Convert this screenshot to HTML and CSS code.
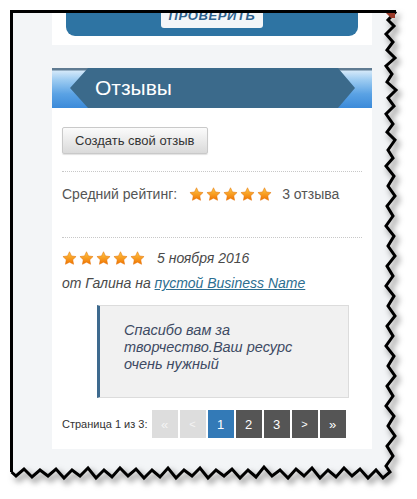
FILE: index.html
```html
<!DOCTYPE html>
<html lang="ru">
<head>
<meta charset="utf-8">
<title>Отзывы</title>
<link rel="stylesheet" href="styles.css">
</head>
<body>
<svg class="defs" width="0" height="0" aria-hidden="true">
  <defs>
    <linearGradient id="sg" x1="0" y1="0" x2="0" y2="1">
      <stop offset="0" stop-color="#ffc847"/>
      <stop offset="1" stop-color="#f07400"/>
    </linearGradient>
    <symbol id="star" viewBox="0 0 24 24">
      <path d="M12 1.2l3.2 6.7 7.3 1-5.3 5.1 1.3 7.3L12 17.8l-6.5 3.5 1.3-7.3L1.5 8.9l7.3-1z" fill="url(#sg)" stroke="#e06c00" stroke-width="0.8" stroke-linejoin="round"/>
    </symbol>
  </defs>
</svg>

<div class="column">
  <div class="top-card">
    <div class="promo"><span class="check-btn">ПРОВЕРИТЬ</span></div>
  </div>

  <div class="ribbon"><h2 class="ribbon-title">Отзывы</h2></div>

  <div class="panel">
    <button class="create" type="button">Создать свой отзыв</button>
    <div class="sep"></div>
    <div class="rating">
      <span class="rating-label">Средний рейтинг:</span>
      <span class="stars">
        <svg class="star"><use href="#star"/></svg><svg class="star"><use href="#star"/></svg><svg class="star"><use href="#star"/></svg><svg class="star"><use href="#star"/></svg><svg class="star"><use href="#star"/></svg>
      </span>
      <span class="rating-count">3 отзыва</span>
    </div>
    <div class="sep sep-wide"></div>

    <div class="review-head">
      <span class="stars">
        <svg class="star"><use href="#star"/></svg><svg class="star"><use href="#star"/></svg><svg class="star"><use href="#star"/></svg><svg class="star"><use href="#star"/></svg><svg class="star"><use href="#star"/></svg>
      </span>
      <span class="review-date">5 ноября 2016</span>
    </div>
    <div class="review-by">от Галина на <a class="review-link" href="#">пустой Business Name</a></div>

    <blockquote class="quote">
      <p class="quote-text">Спасибо вам за творчество.Ваш ресурс очень нужный</p>
    </blockquote>

    <div class="pager">
      <span class="pager-label">Страница 1 из 3:</span>
      <span class="pg pg-off">«</span>
      <span class="pg pg-off pg-small">&lt;</span>
      <span class="pg pg-on">1</span>
      <span class="pg">2</span>
      <span class="pg">3</span>
      <span class="pg pg-small">&gt;</span>
      <span class="pg">»</span>
    </div>
  </div>
</div>

<svg class="frame" width="417" height="499" viewBox="0 0 417 499" aria-hidden="true">
  <defs>
    <filter id="shadow" x="-10%" y="-10%" width="130%" height="130%">
      <feDropShadow dx="3" dy="4" stdDeviation="3" flood-color="#000" flood-opacity="0.55"/>
    </filter>
  </defs>
  <path fill="#ffffff" fill-rule="evenodd" d="M0 0H417V499H0Z M11.5 11.5 L396 11.5 L388 20 L394 26 L386 34 L393 42 L387 50 L395 58 L386 66 L392 74 L387 82 L396 90 L388 98 L394 106 L386 114 L393 124 L387 132 L395 140 L388 150 L393 158 L386 166 L394 176 L388 186 L395 196 L387 206 L393 216 L386 226 L394 236 L388 246 L395 256 L387 266 L393 276 L386 286 L394 296 L388 306 L395 316 L387 326 L393 336 L386 346 L394 356 L388 366 L395 376 L387 386 L393 396 L386 406 L394 416 L388 426 L395 436 L387 446 L393 456 L386 466 L390 472 L383 478 L376 470 L368 478 L360 469 L352 476 L344 468 L336 477 L328 470 L320 478 L312 468 L304 476 L296 469 L288 478 L280 470 L272 476 L264 467 L256 477 L248 470 L240 478 L232 469 L224 476 L216 470 L208 478 L200 468 L192 476 L184 470 L176 478 L168 468 L160 477 L152 470 L144 478 L136 469 L128 476 L120 468 L112 477 L104 470 L96 478 L88 468 L80 476 L72 470 L64 478 L56 469 L48 476 L40 470 L32 477 L24 469 L16 476 L11.5 472 Z"/>
  <path fill="none" stroke="#000" stroke-width="3" stroke-linejoin="miter" filter="url(#shadow)" d="M396 11.5 L388 20 L394 26 L386 34 L393 42 L387 50 L395 58 L386 66 L392 74 L387 82 L396 90 L388 98 L394 106 L386 114 L393 124 L387 132 L395 140 L388 150 L393 158 L386 166 L394 176 L388 186 L395 196 L387 206 L393 216 L386 226 L394 236 L388 246 L395 256 L387 266 L393 276 L386 286 L394 296 L388 306 L395 316 L387 326 L393 336 L386 346 L394 356 L388 366 L395 376 L387 386 L393 396 L386 406 L394 416 L388 426 L395 436 L387 446 L393 456 L386 466 L390 472 L383 478 L376 470 L368 478 L360 469 L352 476 L344 468 L336 477 L328 470 L320 478 L312 468 L304 476 L296 469 L288 478 L280 470 L272 476 L264 467 L256 477 L248 470 L240 478 L232 469 L224 476 L216 470 L208 478 L200 468 L192 476 L184 470 L176 478 L168 468 L160 477 L152 470 L144 478 L136 469 L128 476 L120 468 L112 477 L104 470 L96 478 L88 468 L80 476 L72 470 L64 478 L56 469 L48 476 L40 470 L32 477 L24 469 L16 476 L11.5 472"/>
  <path fill="none" stroke="#000" stroke-width="3" d="M11.5 472 L11.5 11.5 L396 11.5"/>
  <polygon points="386,13 395,13 395,18 391,18" fill="#9a3b2a"/>
</svg>
</body>
</html>
```

FILE: styles.css
```css
html, body {
  margin: 0;
  padding: 0;
}

body {
  width: 417px;
  height: 499px;
  overflow: hidden;
  position: relative;
  background: #f3f5f7;
  font-family: "Liberation Sans", Arial, sans-serif;
  color: #4a4a4a;
}

.defs {
  display: block;
  width: 0;
  height: 0;
  overflow: hidden;
}

.column {
  width: 320px;
  margin-left: 52px;
}

.top-card {
  height: 45px;
  background: #ffffff;
  padding: 0 14px;
}

.promo {
  height: 36px;
  box-sizing: border-box;
  background: #2e74a3;
  border-radius: 0 0 9px 9px;
  display: flex;
  justify-content: center;
  align-items: flex-end;
  padding-bottom: 8px;
}

.check-btn {
  display: block;
  width: 102px;
  height: 28px;
  box-sizing: border-box;
  padding-top: 4px;
  line-height: 24px;
  text-align: center;
  background: #f4f6f8;
  border-radius: 0 0 3px 3px;
  color: #2b5f8c;
  font-weight: bold;
  font-style: italic;
  font-size: 13px;
  letter-spacing: 0.6px;
}

.ribbon {
  position: relative;
  height: 40px;
  margin-top: 23px;
  background: #3b6a8b;
  display: flex;
  align-items: center;
  padding-left: 43px;
}

.ribbon::before,
.ribbon::after {
  content: "";
  position: absolute;
  top: 0;
  height: 40px;
  background: linear-gradient(#5f7b92 0, #5f7b92 2px, #d3e8f9 3px, #9ccbf1 30%, #5aa2e4 65%, #3b8ad9 100%);
}

.ribbon::before {
  left: 0;
  width: 36px;
  clip-path: polygon(0 0, 36px 0, 18px 20px, 36px 40px, 0 40px);
}

.ribbon::after {
  right: 0;
  width: 34px;
  clip-path: polygon(0 0, 34px 0, 34px 40px, 0 40px, 17px 20px);
}

.ribbon-title {
  margin: 0;
  font-weight: normal;
  font-size: 21px;
  color: #ffffff;
}

.panel {
  background: #ffffff;
  padding: 19px 10px 11px;
}

.create {
  display: block;
  height: 27px;
  padding: 0 12px;
  font-family: "Liberation Sans", Arial, sans-serif;
  font-size: 13px;
  color: #333333;
  background: linear-gradient(#fbfbfb, #dadada);
  border: 1px solid #c9c9c9;
  border-radius: 2px;
  box-shadow: 0 1px 1px rgba(0, 0, 0, 0.12);
}

.sep {
  margin-top: 17px;
  border-top: 1px dotted #c8c8c8;
}

.sep-wide {
  margin-top: 33px;
}

.rating {
  margin-top: 12px;
  height: 20px;
  display: flex;
  align-items: center;
  font-size: 14px;
  color: #555555;
}

.stars {
  display: flex;
  gap: 2px;
}

.star {
  width: 15px;
  height: 15px;
  display: block;
}

.rating .stars {
  margin: 0 10px 0 12px;
}

.review-head {
  margin-top: 10px;
  height: 20px;
  display: flex;
  align-items: center;
  gap: 12px;
}

.review-date,
.review-by {
  font-style: italic;
  font-size: 14px;
  color: #4a4a4a;
}

.review-by {
  margin-top: 5px;
  line-height: 20px;
}

.review-link {
  color: #2c6e90;
  text-decoration: underline;
}

.quote {
  margin: 12px 13px 0 35px;
  background: #f1f1f1;
  border: 1px solid #dcdcdc;
  border-left: 3px solid #3e6a8e;
  padding: 16px 0 24px 24px;
}

.quote-text {
  margin: 0;
  width: 185px;
  font-style: italic;
  font-size: 14.5px;
  line-height: 17px;
  color: #3d4a63;
}

.pager {
  margin-top: 12px;
  display: flex;
  align-items: center;
}

.pager-label {
  font-size: 11px;
  color: #333333;
  margin-right: 4px;
}

.pg {
  width: 26px;
  height: 28px;
  margin-right: 2px;
  display: flex;
  align-items: center;
  justify-content: center;
  background: #555555;
  color: #ffffff;
  font-size: 13px;
}

.pg-small {
  font-size: 11px;
}

.pg-off {
  background: #dddddd;
  color: #f4f4f4;
}

.pg-on {
  background: #337ab7;
}

.frame {
  position: absolute;
  left: 0;
  top: 0;
  pointer-events: none;
}
```
